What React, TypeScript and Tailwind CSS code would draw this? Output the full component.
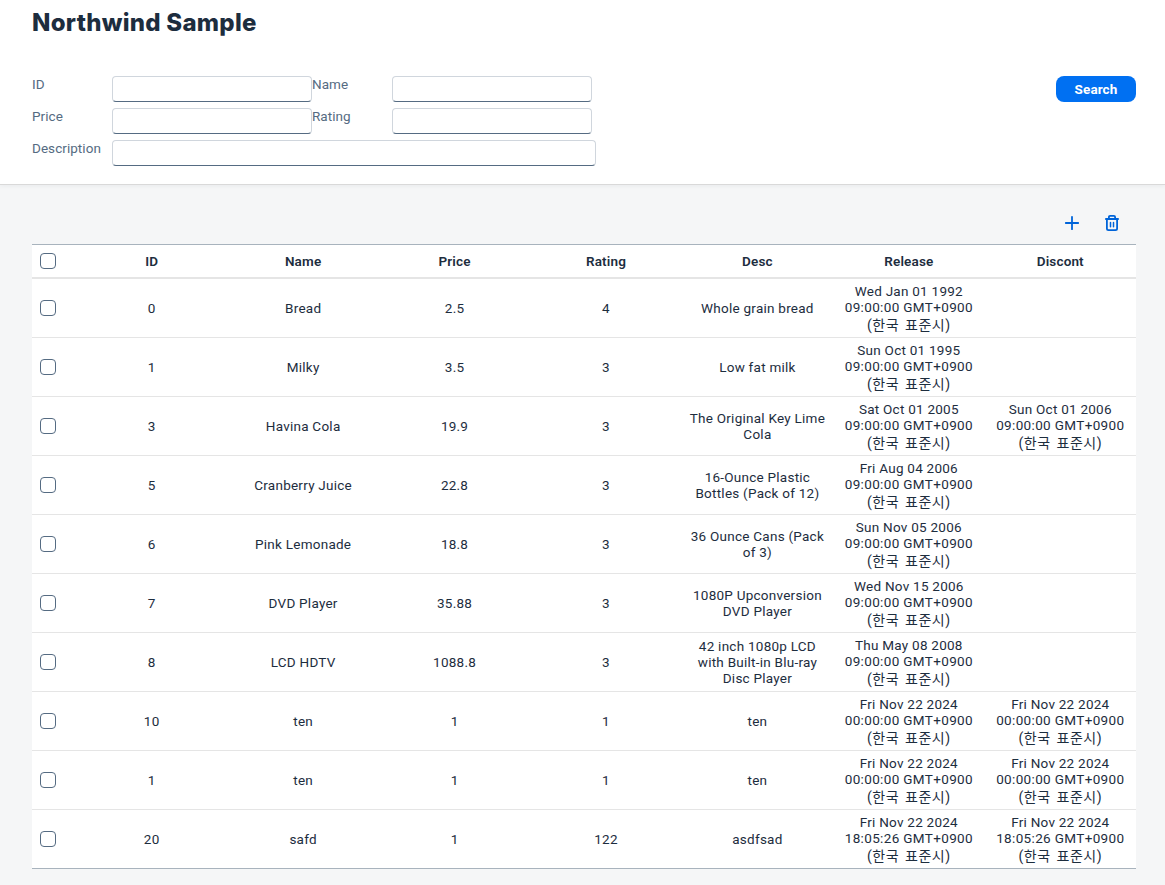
import React from "react";

type Stamp = { date: string; time: string };
type Product = {
  id: string;
  name: string;
  price: string;
  rating: string;
  desc: string[];
  release: Stamp;
  discont?: Stamp;
};

const at = (date: string, time = "09:00:00"): Stamp => ({ date, time });

const products: Product[] = [
  { id: "0", name: "Bread", price: "2.5", rating: "4", desc: ["Whole grain bread"], release: at("Wed Jan 01 1992") },
  { id: "1", name: "Milky", price: "3.5", rating: "3", desc: ["Low fat milk"], release: at("Sun Oct 01 1995") },
  { id: "3", name: "Havina Cola", price: "19.9", rating: "3", desc: ["The Original Key Lime", "Cola"], release: at("Sat Oct 01 2005"), discont: at("Sun Oct 01 2006") },
  { id: "5", name: "Cranberry Juice", price: "22.8", rating: "3", desc: ["16-Ounce Plastic", "Bottles (Pack of 12)"], release: at("Fri Aug 04 2006") },
  { id: "6", name: "Pink Lemonade", price: "18.8", rating: "3", desc: ["36 Ounce Cans (Pack", "of 3)"], release: at("Sun Nov 05 2006") },
  { id: "7", name: "DVD Player", price: "35.88", rating: "3", desc: ["1080P Upconversion", "DVD Player"], release: at("Wed Nov 15 2006") },
  { id: "8", name: "LCD HDTV", price: "1088.8", rating: "3", desc: ["42 inch 1080p LCD", "with Built-in Blu-ray", "Disc Player"], release: at("Thu May 08 2008") },
  { id: "10", name: "ten", price: "1", rating: "1", desc: ["ten"], release: at("Fri Nov 22 2024", "00:00:00"), discont: at("Fri Nov 22 2024", "00:00:00") },
  { id: "1", name: "ten", price: "1", rating: "1", desc: ["ten"], release: at("Fri Nov 22 2024", "00:00:00"), discont: at("Fri Nov 22 2024", "00:00:00") },
  { id: "20", name: "safd", price: "1", rating: "122", desc: ["asdfsad"], release: at("Fri Nov 22 2024", "18:05:26"), discont: at("Fri Nov 22 2024", "18:05:26") },
];

const headers = ["ID", "Name", "Price", "Rating", "Desc", "Release", "Discont"];

function Field({ label, wide = false }: { label: string; wide?: boolean }) {
  return (
    <label className="flex h-8">
      <span className="w-20 text-[13.5px] leading-4 tracking-[0.05px] text-[#556b82]">{label}</span>
      <input
        className={`h-[26px] rounded-[4px] border border-[#d0d6dd] border-b-[#556b82] bg-white px-2 outline-none ${wide ? "w-[484px]" : "w-[200px]"}`}
      />
    </label>
  );
}

function Check() {
  return <span role="checkbox" aria-checked="false" className="block size-4 rounded-[4px] border border-[#556b82] bg-white" />;
}

function DateCell({ value }: { value?: Stamp }) {
  return (
    <div className="flex flex-col items-center whitespace-nowrap leading-4">
      {value && (
        <>
          <span className="tracking-[0.25px]">{value.date}</span>
          <span className="tracking-[0.35px]">{value.time} GMT+0900</span>
          <span className="h-[18px] pt-px text-[14px] leading-[18px] tracking-[0.5px] [word-spacing:2px]">(한국 표준시)</span>
        </>
      )}
    </div>
  );
}

export default function App() {
  return (
    <div className="flex h-[885px] w-[1165px] flex-col overflow-hidden bg-[#f5f6f7] font-['Roboto','Noto_Sans_CJK_KR',sans-serif] text-[13.5px] text-[#1d2d3e]">
      <header className="relative h-[184px] shrink-0 bg-white px-8 pt-2 shadow-[0_1px_0_0_#d9d9d9,0_2px_4px_0_rgba(34,53,72,0.06)]">
        <h1 className="h-[68px] font-['Inter','Noto_Sans_CJK_KR',sans-serif] text-[24px] leading-[29px] font-extrabold tracking-[0.27px]">Northwind Sample</h1>
        <div className="flex items-start justify-between">
          <div>
            <div className="flex">
              <Field label="ID" />
              <Field label="Name" />
            </div>
            <div className="flex">
              <Field label="Price" />
              <Field label="Rating" />
            </div>
            <Field label="Description" wide />
          </div>
          <button className="-mr-[3px] h-[26px] w-20 rounded-[8px] bg-[#0070f2] pt-px text-[13.5px] font-bold tracking-[0.1px] text-white">Search</button>
        </div>
      </header>
      <main className="px-8 pt-[17px]">
        <div className="flex h-[43px] w-[1104px] items-center justify-end gap-6 pr-4">
          <button aria-label="Add">
            <svg className="block size-4" viewBox="0 0 16 16" fill="none" stroke="#0064d9" strokeWidth="1.8" strokeLinecap="round">
              <path d="M8 1.8V14.2M1.8 8H14.2" />
            </svg>
          </button>
          <button aria-label="Delete">
            <svg className="block size-4" viewBox="0 0 16 16" fill="none" stroke="#0064d9" strokeWidth="1.8" strokeLinecap="round" strokeLinejoin="round">
              <path d="M1.9 4H14.1M4.9 3.8V2.1Q4.9 .9 6.1 .9H9.9Q11.1 .9 11.1 2.1V3.8M2.9 4V13.5Q2.9 15.1 4.5 15.1H11.5Q13.1 15.1 13.1 13.5V4" />
              <path d="M6.5 7.5V11.8M9.5 7.5V11.8" strokeWidth="1.5" />
            </svg>
          </button>
        </div>
        <div className="w-[1104px] border-y border-[#a8b3bd] bg-white">
          <div className="grid h-[34px] grid-cols-[44px_repeat(7,1fr)] items-center border-b-2 border-[#e5e5e5] text-center font-semibold tracking-[0.15px]">
            <div className="pl-2"><Check /></div>
            {headers.map((h) => <div key={h} className="pt-px">{h}</div>)}
          </div>
          {products.map((p, i) => (
            <div key={i} className="grid h-[59px] grid-cols-[44px_repeat(7,1fr)] items-center border-b border-[#e5e5e5] text-center leading-4 tracking-[0.25px] last:h-[58px] last:border-b-0">
              <div className="pl-2"><Check /></div>
              <div>{p.id}</div>
              <div>{p.name}</div>
              <div>{p.price}</div>
              <div>{p.rating}</div>
              <div className="whitespace-nowrap">{p.desc.map((line) => <div key={line}>{line}</div>)}</div>
              <DateCell value={p.release} />
              <DateCell value={p.discont} />
            </div>
          ))}
        </div>
      </main>
    </div>
  );
}
